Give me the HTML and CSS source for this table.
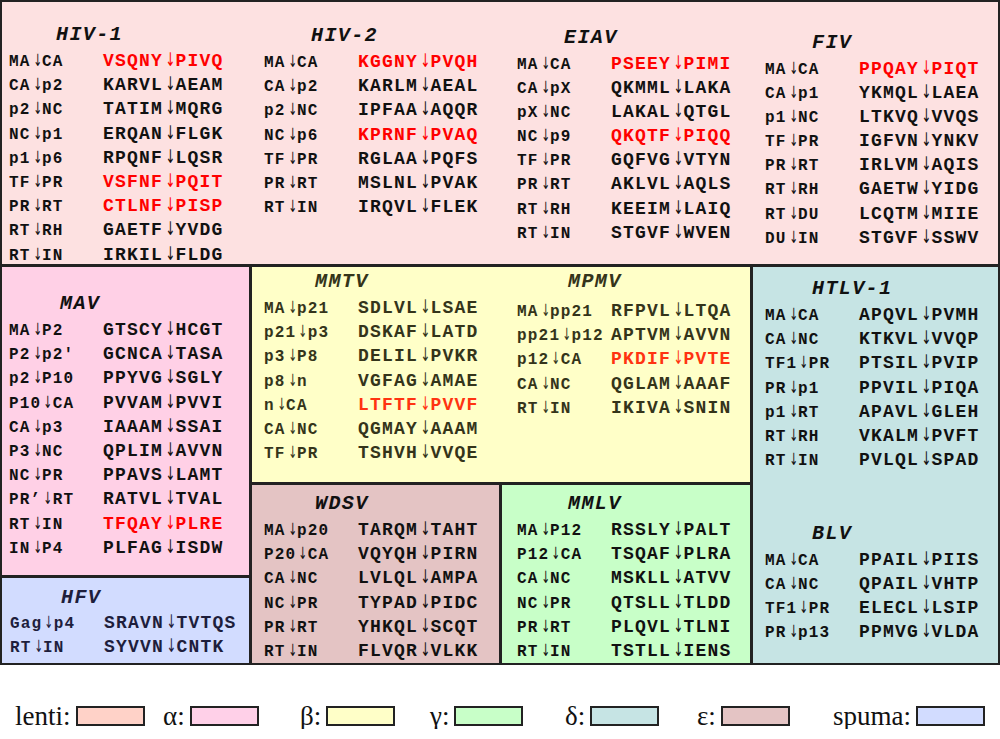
FILE: index.html
```html
<!DOCTYPE html>
<html>
<head>
<meta charset="utf-8">
<link rel="stylesheet" href="styles.css">
</head>
<body>
<div class="frame">
  <div class="cell lenti">
    <div class="blk b-hiv1">
      <div class="ttl">HIV-1</div>
      <div class="row"><span class="lab">MA<span class="ar">↓</span>CA</span><span class="seq red">VSQNY<span class="ar">↓</span>PIVQ</span></div>
      <div class="row"><span class="lab">CA<span class="ar">↓</span>p2</span><span class="seq">KARVL<span class="ar">↓</span>AEAM</span></div>
      <div class="row"><span class="lab">p2<span class="ar">↓</span>NC</span><span class="seq">TATIM<span class="ar">↓</span>MQRG</span></div>
      <div class="row"><span class="lab">NC<span class="ar">↓</span>p1</span><span class="seq">ERQAN<span class="ar">↓</span>FLGK</span></div>
      <div class="row"><span class="lab">p1<span class="ar">↓</span>p6</span><span class="seq">RPQNF<span class="ar">↓</span>LQSR</span></div>
      <div class="row"><span class="lab">TF<span class="ar">↓</span>PR</span><span class="seq red">VSFNF<span class="ar">↓</span>PQIT</span></div>
      <div class="row"><span class="lab">PR<span class="ar">↓</span>RT</span><span class="seq red">CTLNF<span class="ar">↓</span>PISP</span></div>
      <div class="row"><span class="lab">RT<span class="ar">↓</span>RH</span><span class="seq">GAETF<span class="ar">↓</span>YVDG</span></div>
      <div class="row"><span class="lab">RT<span class="ar">↓</span>IN</span><span class="seq">IRKIL<span class="ar">↓</span>FLDG</span></div>
    </div>
    <div class="blk b-hiv2">
      <div class="ttl">HIV-2</div>
      <div class="row"><span class="lab">MA<span class="ar">↓</span>CA</span><span class="seq red">KGGNY<span class="ar">↓</span>PVQH</span></div>
      <div class="row"><span class="lab">CA<span class="ar">↓</span>p2</span><span class="seq">KARLM<span class="ar">↓</span>AEAL</span></div>
      <div class="row"><span class="lab">p2<span class="ar">↓</span>NC</span><span class="seq">IPFAA<span class="ar">↓</span>AQQR</span></div>
      <div class="row"><span class="lab">NC<span class="ar">↓</span>p6</span><span class="seq red">KPRNF<span class="ar">↓</span>PVAQ</span></div>
      <div class="row"><span class="lab">TF<span class="ar">↓</span>PR</span><span class="seq">RGLAA<span class="ar">↓</span>PQFS</span></div>
      <div class="row"><span class="lab">PR<span class="ar">↓</span>RT</span><span class="seq">MSLNL<span class="ar">↓</span>PVAK</span></div>
      <div class="row"><span class="lab">RT<span class="ar">↓</span>IN</span><span class="seq">IRQVL<span class="ar">↓</span>FLEK</span></div>
    </div>
    <div class="blk b-eiav">
      <div class="ttl">EIAV</div>
      <div class="row"><span class="lab">MA<span class="ar">↓</span>CA</span><span class="seq red">PSEEY<span class="ar">↓</span>PIMI</span></div>
      <div class="row"><span class="lab">CA<span class="ar">↓</span>pX</span><span class="seq">QKMML<span class="ar">↓</span>LAKA</span></div>
      <div class="row"><span class="lab">pX<span class="ar">↓</span>NC</span><span class="seq">LAKAL<span class="ar">↓</span>QTGL</span></div>
      <div class="row"><span class="lab">NC<span class="ar">↓</span>p9</span><span class="seq red">QKQTF<span class="ar">↓</span>PIQQ</span></div>
      <div class="row"><span class="lab">TF<span class="ar">↓</span>PR</span><span class="seq">GQFVG<span class="ar">↓</span>VTYN</span></div>
      <div class="row"><span class="lab">PR<span class="ar">↓</span>RT</span><span class="seq">AKLVL<span class="ar">↓</span>AQLS</span></div>
      <div class="row"><span class="lab">RT<span class="ar">↓</span>RH</span><span class="seq">KEEIM<span class="ar">↓</span>LAIQ</span></div>
      <div class="row"><span class="lab">RT<span class="ar">↓</span>IN</span><span class="seq">STGVF<span class="ar">↓</span>WVEN</span></div>
    </div>
    <div class="blk b-fiv">
      <div class="ttl">FIV</div>
      <div class="row"><span class="lab">MA<span class="ar">↓</span>CA</span><span class="seq red">PPQAY<span class="ar">↓</span>PIQT</span></div>
      <div class="row"><span class="lab">CA<span class="ar">↓</span>p1</span><span class="seq">YKMQL<span class="ar">↓</span>LAEA</span></div>
      <div class="row"><span class="lab">p1<span class="ar">↓</span>NC</span><span class="seq">LTKVQ<span class="ar">↓</span>VVQS</span></div>
      <div class="row"><span class="lab">TF<span class="ar">↓</span>PR</span><span class="seq">IGFVN<span class="ar">↓</span>YNKV</span></div>
      <div class="row"><span class="lab">PR<span class="ar">↓</span>RT</span><span class="seq">IRLVM<span class="ar">↓</span>AQIS</span></div>
      <div class="row"><span class="lab">RT<span class="ar">↓</span>RH</span><span class="seq">GAETW<span class="ar">↓</span>YIDG</span></div>
      <div class="row"><span class="lab">RT<span class="ar">↓</span>DU</span><span class="seq">LCQTM<span class="ar">↓</span>MIIE</span></div>
      <div class="row"><span class="lab">DU<span class="ar">↓</span>IN</span><span class="seq">STGVF<span class="ar">↓</span>SSWV</span></div>
    </div>
  </div>

  <div class="cell alpha">
    <div class="blk b-mav">
      <div class="ttl ttl-w">MAV</div>
      <div class="row"><span class="lab">MA<span class="ar">↓</span>P2</span><span class="seq">GTSCY<span class="ar">↓</span>HCGT</span></div>
      <div class="row"><span class="lab">P2<span class="ar">↓</span>p2'</span><span class="seq">GCNCA<span class="ar">↓</span>TASA</span></div>
      <div class="row"><span class="lab">p2<span class="ar">↓</span>P10</span><span class="seq">PPYVG<span class="ar">↓</span>SGLY</span></div>
      <div class="row"><span class="lab">P10<span class="ar">↓</span>CA</span><span class="seq">PVVAM<span class="ar">↓</span>PVVI</span></div>
      <div class="row"><span class="lab">CA<span class="ar">↓</span>p3</span><span class="seq">IAAAM<span class="ar">↓</span>SSAI</span></div>
      <div class="row"><span class="lab">P3<span class="ar">↓</span>NC</span><span class="seq">QPLIM<span class="ar">↓</span>AVVN</span></div>
      <div class="row"><span class="lab">NC<span class="ar">↓</span>PR</span><span class="seq">PPAVS<span class="ar">↓</span>LAMT</span></div>
      <div class="row"><span class="lab">PR’<span class="ar">↓</span>RT</span><span class="seq">RATVL<span class="ar">↓</span>TVAL</span></div>
      <div class="row"><span class="lab">RT<span class="ar">↓</span>IN</span><span class="seq red">TFQAY<span class="ar">↓</span>PLRE</span></div>
      <div class="row"><span class="lab">IN<span class="ar">↓</span>P4</span><span class="seq">PLFAG<span class="ar">↓</span>ISDW</span></div>
    </div>
  </div>

  <div class="cell spuma">
    <div class="blk b-hfv">
      <div class="ttl ttl-w">HFV</div>
      <div class="row row-s"><span class="lab">Gag<span class="ar">↓</span>p4</span><span class="seq">SRAVN<span class="ar">↓</span>TVTQS</span></div>
      <div class="row row-s"><span class="lab">RT<span class="ar">↓</span>IN</span><span class="seq">SYVVN<span class="ar">↓</span>CNTK</span></div>
    </div>
  </div>

  <div class="cell beta">
    <div class="blk b-mmtv">
      <div class="ttl ttl-w">MMTV</div>
      <div class="row"><span class="lab">MA<span class="ar">↓</span>p21</span><span class="seq">SDLVL<span class="ar">↓</span>LSAE</span></div>
      <div class="row"><span class="lab">p21<span class="ar">↓</span>p3</span><span class="seq">DSKAF<span class="ar">↓</span>LATD</span></div>
      <div class="row"><span class="lab">p3<span class="ar">↓</span>P8</span><span class="seq">DELIL<span class="ar">↓</span>PVKR</span></div>
      <div class="row"><span class="lab">p8<span class="ar">↓</span>n</span><span class="seq">VGFAG<span class="ar">↓</span>AMAE</span></div>
      <div class="row"><span class="lab">n<span class="ar">↓</span>CA</span><span class="seq red">LTFTF<span class="ar">↓</span>PVVF</span></div>
      <div class="row"><span class="lab">CA<span class="ar">↓</span>NC</span><span class="seq">QGMAY<span class="ar">↓</span>AAAM</span></div>
      <div class="row"><span class="lab">TF<span class="ar">↓</span>PR</span><span class="seq">TSHVH<span class="ar">↓</span>VVQE</span></div>
    </div>
    <div class="blk b-mpmv">
      <div class="ttl ttl-w ttl-gap">MPMV</div>
      <div class="row"><span class="lab">MA<span class="ar">↓</span>pp21</span><span class="seq">RFPVL<span class="ar">↓</span>LTQA</span></div>
      <div class="row"><span class="lab">pp21<span class="ar">↓</span>p12</span><span class="seq">APTVM<span class="ar">↓</span>AVVN</span></div>
      <div class="row"><span class="lab">p12<span class="ar">↓</span>CA</span><span class="seq red">PKDIF<span class="ar">↓</span>PVTE</span></div>
      <div class="row"><span class="lab">CA<span class="ar">↓</span>NC</span><span class="seq">QGLAM<span class="ar">↓</span>AAAF</span></div>
      <div class="row"><span class="lab">RT<span class="ar">↓</span>IN</span><span class="seq">IKIVA<span class="ar">↓</span>SNIN</span></div>
    </div>
  </div>

  <div class="cell epsilon">
    <div class="blk b-wdsv">
      <div class="ttl ttl-w">WDSV</div>
      <div class="row"><span class="lab">MA<span class="ar">↓</span>p20</span><span class="seq">TARQM<span class="ar">↓</span>TAHT</span></div>
      <div class="row"><span class="lab">P20<span class="ar">↓</span>CA</span><span class="seq">VQYQH<span class="ar">↓</span>PIRN</span></div>
      <div class="row"><span class="lab">CA<span class="ar">↓</span>NC</span><span class="seq">LVLQL<span class="ar">↓</span>AMPA</span></div>
      <div class="row"><span class="lab">NC<span class="ar">↓</span>PR</span><span class="seq">TYPAD<span class="ar">↓</span>PIDC</span></div>
      <div class="row"><span class="lab">PR<span class="ar">↓</span>RT</span><span class="seq">YHKQL<span class="ar">↓</span>SCQT</span></div>
      <div class="row"><span class="lab">RT<span class="ar">↓</span>IN</span><span class="seq">FLVQR<span class="ar">↓</span>VLKK</span></div>
    </div>
  </div>

  <div class="cell gamma">
    <div class="blk b-mmlv">
      <div class="ttl ttl-w">MMLV</div>
      <div class="row"><span class="lab">MA<span class="ar">↓</span>P12</span><span class="seq">RSSLY<span class="ar">↓</span>PALT</span></div>
      <div class="row"><span class="lab">P12<span class="ar">↓</span>CA</span><span class="seq">TSQAF<span class="ar">↓</span>PLRA</span></div>
      <div class="row"><span class="lab">CA<span class="ar">↓</span>NC</span><span class="seq">MSKLL<span class="ar">↓</span>ATVV</span></div>
      <div class="row"><span class="lab">NC<span class="ar">↓</span>PR</span><span class="seq">QTSLL<span class="ar">↓</span>TLDD</span></div>
      <div class="row"><span class="lab">PR<span class="ar">↓</span>RT</span><span class="seq">PLQVL<span class="ar">↓</span>TLNI</span></div>
      <div class="row"><span class="lab">RT<span class="ar">↓</span>IN</span><span class="seq">TSTLL<span class="ar">↓</span>IENS</span></div>
    </div>
  </div>

  <div class="cell delta">
    <div class="blk b-htlv">
      <div class="ttl">HTLV-1</div>
      <div class="row"><span class="lab">MA<span class="ar">↓</span>CA</span><span class="seq">APQVL<span class="ar">↓</span>PVMH</span></div>
      <div class="row"><span class="lab">CA<span class="ar">↓</span>NC</span><span class="seq">KTKVL<span class="ar">↓</span>VVQP</span></div>
      <div class="row"><span class="lab">TF1<span class="ar">↓</span>PR</span><span class="seq">PTSIL<span class="ar">↓</span>PVIP</span></div>
      <div class="row"><span class="lab">PR<span class="ar">↓</span>p1</span><span class="seq">PPVIL<span class="ar">↓</span>PIQA</span></div>
      <div class="row"><span class="lab">p1<span class="ar">↓</span>RT</span><span class="seq">APAVL<span class="ar">↓</span>GLEH</span></div>
      <div class="row"><span class="lab">RT<span class="ar">↓</span>RH</span><span class="seq">VKALM<span class="ar">↓</span>PVFT</span></div>
      <div class="row"><span class="lab">RT<span class="ar">↓</span>IN</span><span class="seq">PVLQL<span class="ar">↓</span>SPAD</span></div>
    </div>
    <div class="blk b-blv">
      <div class="ttl">BLV</div>
      <div class="row"><span class="lab">MA<span class="ar">↓</span>CA</span><span class="seq">PPAIL<span class="ar">↓</span>PIIS</span></div>
      <div class="row"><span class="lab">CA<span class="ar">↓</span>NC</span><span class="seq">QPAIL<span class="ar">↓</span>VHTP</span></div>
      <div class="row"><span class="lab">TF1<span class="ar">↓</span>PR</span><span class="seq">ELECL<span class="ar">↓</span>LSIP</span></div>
      <div class="row"><span class="lab">PR<span class="ar">↓</span>p13</span><span class="seq">PPMVG<span class="ar">↓</span>VLDA</span></div>
    </div>
  </div>
</div>

<div class="legend">
  <div class="item"><span>lenti:</span><span class="sw sw-lenti"></span></div>
  <div class="item"><span>α:</span><span class="sw sw-alpha"></span></div>
  <div class="item"><span>β:</span><span class="sw sw-beta"></span></div>
  <div class="item"><span>γ:</span><span class="sw sw-gamma"></span></div>
  <div class="item"><span>δ:</span><span class="sw sw-delta"></span></div>
  <div class="item"><span>ε:</span><span class="sw sw-eps"></span></div>
  <div class="item"><span>spuma:</span><span class="sw sw-spuma"></span></div>
</div>
</body>
</html>
```

FILE: styles.css
```css
html, body {
  margin: 0;
  padding: 0;
  background: #fff;
}

body {
  width: 1000px;
  font-family: "Liberation Mono", "DejaVu Sans Mono", monospace;
  color: #111;
}

.frame {
  box-sizing: border-box;
  width: 1000px;
  height: 665px;
  border: 2px solid #222;
  background: #222;
  display: grid;
  gap: 3px;
  grid-template-columns: 247px 247px 248px 245px;
  grid-template-rows: 262px 215px 90px 85px;
  grid-template-areas:
    "lenti lenti lenti lenti"
    "mav beta beta delta"
    "mav wdsv mmlv delta"
    "hfv wdsv mmlv delta";
}

.cell {
  overflow: hidden;
}

.lenti {
  grid-area: lenti;
  background: #fde1e1;
  display: grid;
  grid-template-columns: 250px 250px 251px auto;
}
.alpha { grid-area: mav; background: #ffd0e6; }
.spuma { grid-area: hfv; background: #d2dcff; color: #1e1e3c; }
.beta {
  grid-area: beta;
  background: #ffffc8;
  color: #34341a;
  display: grid;
  grid-template-columns: 250px auto;
}
.beta .red { color: #ff3311; }
.epsilon { grid-area: wdsv; background: #e4c4c4; }
.gamma { grid-area: mmlv; background: #c8ffc8; }
.delta { grid-area: delta; background: #c6e4e4; }

.blk {
  display: flex;
  flex-direction: column;
}

.ttl {
  font-size: 20px;
  font-weight: bold;
  font-style: italic;
  letter-spacing: 1.4px;
  line-height: 28px;
  height: 28px;
  margin-left: 47px;
}
.ttl-w { margin-left: 51px; }
.ttl-gap { margin-bottom: 3px; }

.row {
  display: flex;
  align-items: baseline;
  height: 24.2px;
  line-height: 24.2px;
  white-space: nowrap;
  font-weight: bold;
}

.lab {
  width: 94px;
  flex: none;
  font-size: 16px;
  letter-spacing: 1.2px;
}

.seq {
  font-size: 18px;
  letter-spacing: 1.2px;
}

.ar {
  display: inline-block;
  width: calc(0.6em + 1.2px);
  text-align: center;
  font-family: "DejaVu Sans", sans-serif;
  font-weight: normal;
  font-size: 1.05em;
  letter-spacing: 0;
  line-height: 1;
  transform: scaleX(0.62);
}

.red { color: #ff0000; }

.b-hiv1 { padding: 19px 0 0 7px; }
.b-hiv2 { padding: 20px 0 0 12px; }
.b-eiav { padding: 21.5px 0 0 15px; }
.b-fiv { padding: 26.5px 0 0 12px; }
.b-mav { padding: 23px 0 0 7px; }
.b-hfv { padding: 6px 0 0 8px; }
.b-mmtv { padding: 1px 0 0 12px; }
.b-mpmv { padding: 1px 0 0 15px; }
.b-wdsv { padding: 5px 0 0 12px; }
.b-mmlv { padding: 5px 0 0 15px; }
.b-htlv { padding: 8px 0 0 12px; }
.b-blv { padding: 47.5px 0 0 12px; }

.row-s { height: 23.5px; line-height: 23.5px; }

.legend {
  margin-top: 38px;
  padding-left: 15px;
  display: grid;
  grid-template-columns: 148px 137px 130px 135px 132px 136px auto;
  font-family: "Liberation Serif", "DejaVu Serif", serif;
  font-size: 27px;
  line-height: 26px;
  color: #111;
}

.item {
  display: flex;
  align-items: center;
  gap: 5px;
}

.sw {
  box-sizing: border-box;
  width: 69px;
  height: 20px;
  border: 2px solid #222;
}
.sw-lenti { background: #ffd2c8; }
.sw-alpha { background: #ffd0e8; }
.sw-beta { background: #ffffc8; }
.sw-gamma { background: #c8ffc8; }
.sw-delta { background: #c6e4e4; }
.sw-eps { background: #e4c4c4; }
.sw-spuma { background: #d2dcff; }
```
